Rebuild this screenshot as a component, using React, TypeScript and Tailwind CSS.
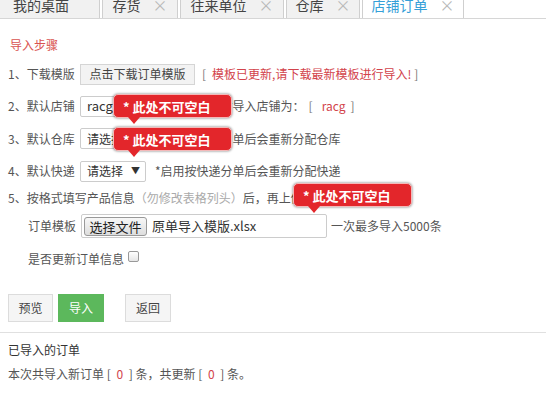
import React from 'react';

const font = { fontFamily: '"Noto Sans CJK SC", "Liberation Sans", sans-serif' };

const Tip = ({ className }: { className: string }) => (
  <div className={`absolute ${className}`}>
    <div className="relative w-[119px] h-[24px] rounded-[5px] bg-[#e3262b] border border-[#f4b8b8] shadow-[0_0_2px_1px_rgba(0,0,0,0.25)] flex items-center pl-[9px] text-white text-[13px] font-bold leading-none">
      * 此处不可空白
      <div className="absolute left-[14px] -bottom-[7px] w-0 h-0 border-l-[6px] border-r-[6px] border-t-[7px] border-l-transparent border-r-transparent border-t-[#e3262b]" />
    </div>
  </div>
);

const Tab = ({ label, w, active, close = true }: { label: string; w: string; active?: boolean; close?: boolean }) => (
  <div
    className={`${w} h-full flex items-center justify-center gap-[12px] border-x border-[#cfcfcf] ${
      active ? 'bg-white text-[#35a0d8] h-[27px] -mb-px' : 'bg-[#f1f1f1] text-[#444]'
    }`}
  >
    <span>{label}</span>
    {close && <span className="text-[#b8b8b8] text-[15px]">×</span>}
  </div>
);

export default function App() {
  return (
    <div className="relative w-[546px] h-[411px] overflow-hidden bg-white text-[12px] text-[#555]" style={font}>
      {/* tab bar */}
      <div className="-mt-[8px] h-[27px] flex items-start gap-[2px] border-b border-[#d6d6d6] text-[14px] pl-0">
        <div className="w-[100px] h-full flex items-center pl-[13px] bg-[#f1f1f1] border-r border-[#cfcfcf] text-[#444]">我的桌面</div>
        <Tab label="存货" w="w-[76px]" />
        <Tab label="往来单位" w="w-[104px]" />
        <Tab label="仓库" w="w-[74px]" />
        <Tab label="店铺订单" w="w-[102px]" active />
      </div>

      <div className="pl-[10px] pt-[19px] text-[#d9534f] leading-[14px]">导入步骤</div>

      <div className="pl-[8px] pt-[6px]">
        {/* 1 */}
        <div className="h-[32px] flex items-center">
          <span className="w-[72px]">1、下载模版</span>
          <button className="h-[21px] w-[115px] bg-[#f3f3f3] border border-[#d5d5d5] text-[#444] text-[12px]">点击下载订单模版</button>
          <span className="ml-[7px] text-[#777]">[</span>
          <span className="ml-[6px] text-[#d2434b]">模板已更新,请下载最新模板进行导入!</span>
          <span className="ml-[3px] text-[#777]">]</span>
        </div>
        {/* 2 */}
        <div className="h-[32px] flex items-center">
          <span className="w-[72px]">2、默认店铺</span>
          <div className="h-[21px] w-[66px] border border-[#ccc] rounded-[2px] flex items-center pl-[6px] text-[#333] text-[13px]">racg</div>
          <span className="ml-[9px]">*未选择店铺时导入店铺为：</span>
          <span className="ml-[4px] text-[#777]">[</span>
          <span className="ml-[9px] text-[#d2434b]">racg</span>
          <span className="ml-[5px] text-[#777]">]</span>
        </div>
        {/* 3 */}
        <div className="h-[33px] flex items-center">
          <span className="w-[72px]">3、默认仓库</span>
          <div className="h-[21px] w-[66px] border border-[#ccc] rounded-[2px] flex items-center pl-[6px] text-[#333]">
            请选择 <span className="ml-[8px] text-[9px]">▼</span>
          </div>
          <span className="ml-[9px]">*启用按仓库分单后会重新分配仓库</span>
        </div>
        {/* 4 */}
        <div className="h-[32px] flex items-center">
          <span className="w-[72px]">4、默认快递</span>
          <div className="h-[21px] w-[66px] border border-[#ccc] rounded-[2px] flex items-center pl-[6px] text-[#333]">
            请选择 <span className="ml-[8px] text-[9px]">▼</span>
          </div>
          <span className="ml-[9px]">*启用按快递分单后会重新分配快递</span>
        </div>
        {/* 5 */}
        <div className="h-[22px] flex items-center">
          <span>5、按格式填写产品信息</span>
          <span className="text-[#aaa]">（勿修改表格列头）</span>
          <span>后，再上传</span>
        </div>
        <div className="h-[34px] flex items-center pl-[20px]">
          <span className="w-[53px]">订单模板</span>
          <div className="h-[24px] w-[246px] border border-[#ccc] rounded-[2px] flex items-center pl-[2px]">
            <button className="h-[19px] w-[63px] bg-gradient-to-b from-[#f7f7f7] to-[#dedede] border border-[#999] rounded-[3px] text-[13px] text-[#222] leading-none">选择文件</button>
            <span className="ml-[5px] text-[13px] text-[#333]">原单导入模版.xlsx</span>
          </div>
          <span className="ml-[4px]">一次最多导入5000条</span>
        </div>
        <div className="h-[32px] flex items-center pl-[20px]">
          <span>是否更新订单信息</span>
          <span className="ml-[4px] -mt-[6px] w-[11px] h-[11px] border border-[#999] rounded-[2px] bg-gradient-to-b from-white to-[#e6e6e6]" />
        </div>

        <div className="mt-[19px] flex items-center">
          <button className="h-[28px] w-[45px] bg-[#f5f5f5] border border-[#dcdcdc] text-[#444]">预览</button>
          <button className="ml-[5px] h-[28px] w-[46px] bg-[#5cb85c] text-white">导入</button>
          <button className="ml-[21px] h-[28px] w-[46px] bg-[#f5f5f5] border border-[#dcdcdc] text-[#444]">返回</button>
        </div>
      </div>

      <div className="mt-[10px] border-t border-[#e0e0e0]" />

      <div className="pl-[8px] pt-[10px] text-[#333] leading-[14px]">已导入的订单</div>
      <div className="pl-[8px] pt-[10px] leading-[14px]">
        本次共导入新订单 [ <span className="text-[#d2434b] mx-[3px]">0</span> ] 条，共更新 [ <span className="text-[#d2434b] mx-[3px]">0</span> ] 条。
      </div>

      <Tip className="left-[113px] top-[94px]" />
      <Tip className="left-[113px] top-[127px]" />
      <Tip className="left-[293px] top-[183px]" />
    </div>
  );
}
